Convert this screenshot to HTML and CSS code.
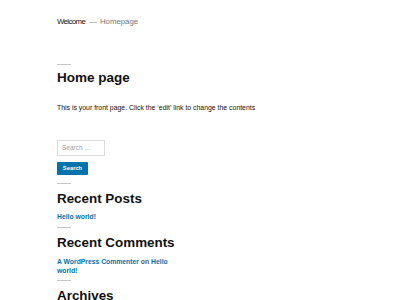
FILE: index.html
```html
<!DOCTYPE html>
<html lang="en">
<head>
<meta charset="utf-8">
<title>Welcome – Homepage</title>
<link rel="stylesheet" href="styles.css">
</head>
<body>
<div class="page">
  <header class="site-header">
    <span class="site-title">Welcome</span><span class="sep">—</span><span class="site-desc">Homepage</span>
  </header>

  <main class="entry">
    <div class="rule rule-title"></div>
    <h1 class="entry-title">Home page</h1>
    <p class="entry-content">This is your front page. Click the ‘edit’ link to change the contents</p>
  </main>

  <aside class="widgets">
    <form class="search-form">
      <input class="search-field" type="search" placeholder="Search …">
      <button class="search-submit" type="button">Search</button>
    </form>

    <section class="widget">
      <div class="rule"></div>
      <h2 class="widget-title">Recent Posts</h2>
      <ul class="widget-list"><li><a href="#">Hello world!</a></li></ul>
    </section>

    <section class="widget">
      <div class="rule"></div>
      <h2 class="widget-title">Recent Comments</h2>
      <ul class="widget-list comments"><li><a href="#">A WordPress Commenter</a> <span class="on">on</span> <a href="#">Hello world!</a></li></ul>
    </section>

    <section class="widget">
      <div class="rule"></div>
      <h2 class="widget-title">Archives</h2>
    </section>
  </aside>
</div>
</body>
</html>
```

FILE: styles.css
```css
html, body {
  margin: 0;
  padding: 0;
  background: #ffffff;
}

body {
  font-family: "Liberation Sans", Arial, sans-serif;
  color: #111111;
  overflow: hidden;
}

.page {
  padding: 17px 0 0 57px;
}

.site-header {
  font-size: 7.8px;
  line-height: 10px;
  height: 10px;
  white-space: nowrap;
}

.site-title {
  color: #111111;
  letter-spacing: -0.6px;
}

.sep {
  color: #8a8a8a;
  margin: 0 3px 0 4px;
}

.site-desc {
  color: #767676;
}

.rule {
  width: 14px;
  height: 1px;
  background: #c4c4c4;
}

.rule-title {
  margin-top: 37px;
}

.entry-title {
  margin: 4.5px 0 0;
  font-size: 13.5px;
  line-height: 16px;
  font-weight: 700;
  color: #111111;
}

.entry-content {
  margin: 17px 0 0;
  font-size: 6.9px;
  line-height: 10px;
  color: #111111;
  white-space: nowrap;
}

.widgets {
  width: 125px;
}

.search-form {
  margin-top: 27.4px;
}

.search-field {
  display: block;
  box-sizing: border-box;
  width: 48px;
  height: 16px;
  margin: 0;
  padding: 0 4px;
  border: 1px solid #dcdcdc;
  border-radius: 0;
  background: #ffffff;
  font-family: "Liberation Sans", Arial, sans-serif;
  font-size: 6.5px;
  color: #111111;
  outline: none;
}

.search-field::placeholder {
  color: #a0a0a0;
}

.search-submit {
  display: block;
  box-sizing: border-box;
  width: 31px;
  height: 13.5px;
  margin: 6px 0 0;
  padding: 0;
  border: none;
  border-radius: 1px;
  background: #0073aa;
  color: #ffffff;
  font-family: "Liberation Sans", Arial, sans-serif;
  font-size: 5.8px;
  font-weight: 700;
  line-height: 13.5px;
}

.widget {
  margin-top: 5px;
}

.widget:first-of-type {
  margin-top: 8px;
}

.widget-title {
  margin: 7px 0 0;
  font-size: 13.4px;
  line-height: 16px;
  font-weight: 700;
  color: #111111;
}

.widget-list {
  list-style: none;
  margin: 4.6px 0 0;
  padding: 0;
  font-size: 6.8px;
  line-height: 10px;
  font-weight: 700;
}

.widget-list.comments {
  line-height: 9px;
  margin-top: 6px;
}

.widget-list a {
  color: #0073aa;
  text-decoration: none;
}

.on {
  color: #555555;
}
```
